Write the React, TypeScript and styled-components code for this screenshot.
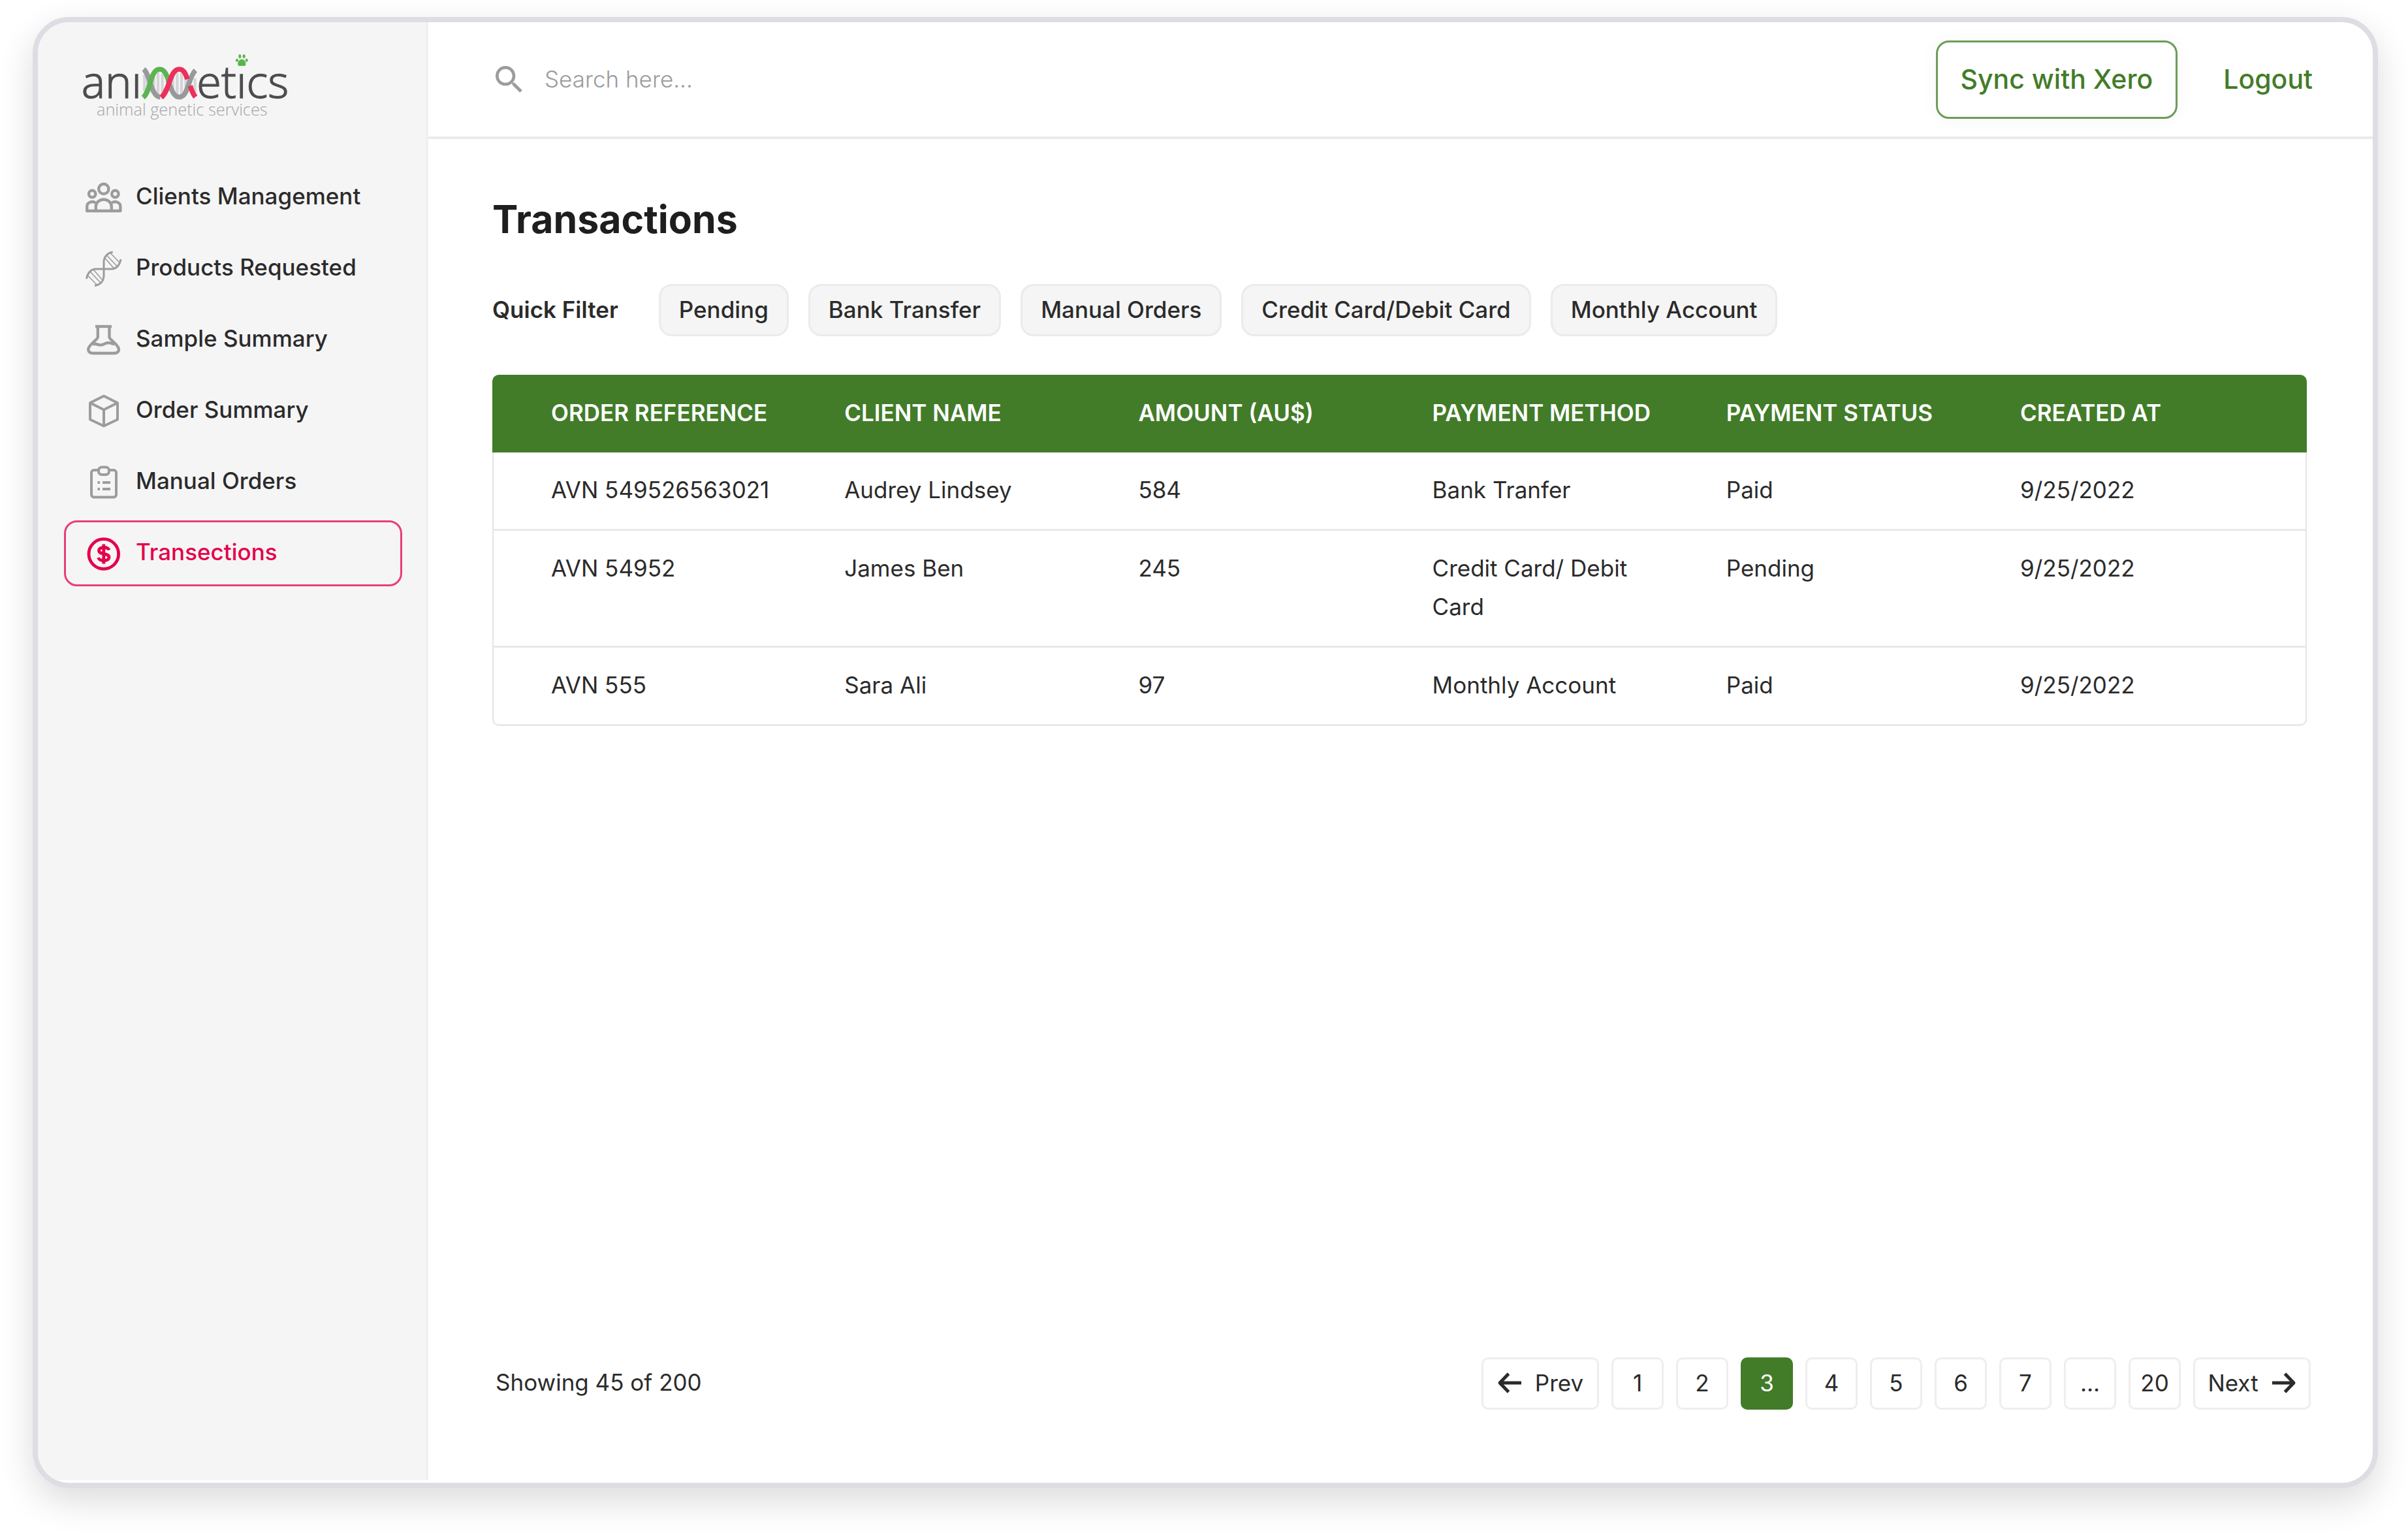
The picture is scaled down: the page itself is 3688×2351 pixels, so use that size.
import React from "react";
import styled, { createGlobalStyle } from "styled-components";
import { MdSearch } from "react-icons/md";

const color = {
  green: "#427c29",
  pink: "#e4004b",
  ink: "#2b2b2b",
  heading: "#1e1e1e",
  muted: "#9c9c9c",
  line: "#ebebeb",
  panel: "#f5f5f5",
  frame: "#dfdce4",
};

const GlobalStyle = createGlobalStyle`
  *, *::before, *::after { box-sizing: border-box; }
  body {
    margin: 0;
    background: #fff;
    color: ${color.ink};
    font-family: Inter, "Liberation Sans", sans-serif;
    font-size: 35px;
    line-height: 59px;
  }
  button, input { font: inherit; color: inherit; }
  button { cursor: pointer; }
`;

const Page = styled.div`
  display: flex;
  min-height: 100vh;
  padding: 26px 46px 72px 50px;
`;

const Frame = styled.div`
  display: flex;
  flex: 1;
  border: 8px solid ${color.frame};
  border-radius: 56px;
  padding-bottom: 4px;
  overflow: hidden;
  background: #fff;
  box-shadow: 0 20px 54px rgba(0, 0, 0, 0.14);
`;

const Sidebar = styled.aside`
  flex: 0 0 598px;
  padding: 26px 36px 40px 40px;
  background: ${color.panel};
  border-right: 4px solid #f0f0f0;
`;

const LogoLink = styled.a`
  display: block;
  height: 140px;
  margin-bottom: 52px;
`;

const NavList = styled.ul`
  display: flex;
  flex-direction: column;
  gap: 8px;
  margin: 0;
  padding: 0;
  list-style: none;
`;

const NavLink = styled.a<{ $active?: boolean }>`
  display: flex;
  align-items: center;
  gap: 21px;
  height: 101px;
  padding: 0 30px;
  border: 3px solid ${(p) => (p.$active ? "#e83f74" : "transparent")};
  border-radius: 20px;
  color: ${(p) => (p.$active ? color.pink : color.ink)};
  font-weight: 500;
  text-decoration: none;
  white-space: nowrap;

  svg {
    flex: none;
    color: ${(p) => (p.$active ? color.pink : color.muted)};
  }
`;

const NavText = styled.span`
  padding-bottom: 4px;
`;

const Main = styled.main`
  display: flex;
  flex: 1;
  flex-direction: column;
  min-width: 0;
`;

const TopBar = styled.header`
  display: flex;
  align-items: center;
  justify-content: space-between;
  height: 179px;
  padding: 0 92px 0 96px;
  border-bottom: 4px solid ${color.line};
`;

const SearchBox = styled.label`
  display: flex;
  flex: 1;
  align-items: center;
  gap: 26px;
  color: ${color.muted};
`;

const SearchInput = styled.input`
  flex: 1;
  max-width: 900px;
  padding: 0;
  border: 0;
  outline: 0;
  background: transparent;
  font-weight: 300;

  &::placeholder {
    color: ${color.muted};
    opacity: 1;
  }
`;

const Actions = styled.div`
  display: flex;
  align-items: center;
  gap: 70px;
  color: ${color.green};
  font-size: 41px;
  font-weight: 500;
`;

const SyncButton = styled.button`
  height: 120px;
  padding: 0 35px;
  border: 3px solid #6c9c58;
  border-radius: 20px;
  background: #fff;
  box-shadow: 0 0 24px rgba(140, 60, 80, 0.05);
`;

const LogoutButton = styled.button`
  padding: 0;
  border: 0;
  background: transparent;
`;

const Content = styled.div`
  display: flex;
  flex: 1;
  flex-direction: column;
  padding: 88px 101px 108px 98px;
`;

const Title = styled.h1`
  margin: 0;
  color: ${color.heading};
  font-size: 59px;
  font-weight: 700;
  line-height: 70px;
`;

const Filters = styled.div`
  display: flex;
  align-items: center;
  gap: 30px;
  margin: 64px 0 59px;
`;

const FilterTitle = styled.span`
  margin-right: 32px;
  padding-bottom: 2px;
  font-weight: 600;
`;

const Chip = styled.button`
  height: 80px;
  padding: 0 28px 2px;
  border: 3px solid ${color.line};
  border-radius: 20px;
  background: ${color.panel};
  font-weight: 500;
  white-space: nowrap;
`;

const Table = styled.table`
  width: 100%;
  table-layout: fixed;
  border-spacing: 0;
  text-align: left;
`;

const Col = styled.col<{ $width?: string }>`
  width: ${(p) => p.$width ?? "auto"};
`;

const Th = styled.th`
  height: 119px;
  padding: 0 0 2px 39px;
  background: ${color.green};
  color: #fff;
  font-weight: 600;
  white-space: nowrap;

  &:first-child {
    padding-left: 90px;
    border-top-left-radius: 10px;
  }
  &:last-child {
    border-top-right-radius: 10px;
  }
`;

const Td = styled.td`
  padding: 28px 39px 30px;
  border-bottom: 3px solid #e8e8e8;
  vertical-align: top;

  &:first-child {
    padding-left: 88px;
    border-left: 2px solid #e4e4e4;
  }
  &:last-child {
    border-right: 2px solid #e4e4e4;
  }
  tr:last-child > &:first-child {
    border-bottom-left-radius: 10px;
  }
  tr:last-child > &:last-child {
    border-bottom-right-radius: 10px;
  }
`;

const Footer = styled.footer`
  display: flex;
  align-items: center;
  justify-content: space-between;
  margin: auto -6px 0 5px;
`;

const FooterText = styled.span`
  padding-bottom: 4px;
`;

const Pager = styled.nav`
  display: flex;
  gap: 19px;
`;

const PageButton = styled.button<{ $current?: boolean; $wide?: boolean }>`
  display: flex;
  align-items: center;
  justify-content: center;
  gap: 20px;
  width: ${(p) => (p.$wide ? "180px" : "80px")};
  height: 80px;
  padding: 0 0 2px;
  border: 3px solid ${(p) => (p.$current ? color.green : "#eeeeee")};
  border-radius: 10px;
  background: ${(p) => (p.$current ? color.green : "#fff")};
  color: ${(p) => (p.$current ? "#fff" : color.ink)};
`;

const Icon = ({ children, width = 4 }: { children: React.ReactNode; width?: number }) => (
  <svg
    width="56"
    height="56"
    viewBox="0 0 56 56"
    fill="none"
    stroke="currentColor"
    strokeWidth={width}
    strokeLinejoin="round"
    aria-hidden="true"
  >
    {children}
  </svg>
);

const ClientsIcon = () => (
  <Icon width={4.4}>
    <circle cx="27.8" cy="14.4" r="7.6" />
    <circle cx="10.2" cy="22" r="5.2" />
    <circle cx="45.4" cy="22" r="5.2" />
    <path d="M15.8 48V41.5a12 11 0 0 1 24 0V48Z" />
    <path d="M15.8 48H2.2V41c0-6 8-9 13-5.4M39.8 48h13.6V41c0-6-8-9-13-5.4" />
  </Icon>
);

const DnaIcon = () => (
  <Icon width={3}>
    <path d="M41.6 2C33 3.500 28 10 28 17V38c0 8-5 14-14 15.500" />
    <path d="M54 13c-1.500 9-7 15-14.500 15H16C8.500 28 3 34 1.500 43" />
    <g strokeWidth="1.600">
      <path d="M29.500 11 43 26.500M32.500 7 48 23.500M38 3.500 52.500 18.500" />
      <path d="M26 45 12.500 29.500M23 49 7.500 32.500M17.500 52.500 3 37.500" />
    </g>
  </Icon>
);

const FlaskIcon = () => (
  <Icon width={4.4}>
    <path d="M15 7H40" />
    <path d="M18.800 7V23.500C18.800 27 4.200 35 4.200 42c0 4 3 6 7 6H44c4 0 7-2 7-6 0-7-14.500-15-14.500-18.500V7" />
    <path d="M11 34.500c5-2.500 8.500 1.500 13 .8s6-3.300 11-3.300c4 0 6 1.500 9 2.500" />
  </Icon>
);

const BoxIcon = () => (
  <Icon width={4}>
    <path d="M28 4.500 49 15V40.500L28 50.500 7 40.500V15Z" />
    <path d="M7 15 28 25.500 49 15M28 25.500V50.500" />
  </Icon>
);

const ClipboardIcon = () => (
  <Icon width={4}>
    <path d="M19 9H13a4 4 0 0 0-4 4V46.500a4 4 0 0 0 4 4H43a4 4 0 0 0 4-4V13a4 4 0 0 0-4-4H37" />
    <rect x="20" y="4.500" width="16" height="11.500" rx="5" />
    <path d="M18.500 28H22M26 28H38M18.500 38H22M26 38H38" />
  </Icon>
);

const DollarIcon = () => (
  <Icon width={4.8}>
    <circle cx="27.800" cy="28.500" r="22.800" />
    <path d="M36 22.500c-1-3-4-4-8-4-4.500 0-7.500 1.600-7.500 4.800 0 7 15.500 3 15.500 10.200 0 3.300-3.300 5-8 5s-7.500-1.500-8.300-4.500M27.800 13.500V43.500" />
  </Icon>
);

const Arrow = ({ forward }: { forward?: boolean }) => (
  <svg
    width="38"
    height="34"
    viewBox="0 0 38 34"
    fill="none"
    stroke="currentColor"
    strokeWidth="5"
    strokeLinejoin="round"
    aria-hidden="true"
  >
    <path d={forward ? "M1 17H34M20.500 3 34 17 20.500 31" : "M37 17H4M17.500 3 4 17 17.500 31"} />
  </svg>
);

const Logo = () => (
  <svg width="380" height="140" viewBox="0 0 1140 420" role="img" aria-label="animetics animal genetic services">
    <g fill="#4d4d4f" stroke="#4d4d4f" strokeWidth="4" fontFamily="Open Sans" fontWeight="300" fontSize="206">
      <text x="80" y="270">anı</text>
      <text x="610" y="270">etıcs</text>
    </g>
    <text x="150" y="350" fill="#a3a5a7" fontFamily="Open Sans" fontWeight="300" fontSize="76">
      animal genetic services
    </text>
    <g stroke="#d3d5d6" strokeWidth="13" fill="none">
      <path d="M370 165V240M384 190V225M412 175V225M432 150V255M452 160V250M500 175V240M520 155V255M540 155V255M560 185V240M602 180V245" />
    </g>
    <g fill="none" strokeWidth="23">
      <path stroke="#97999b" d="M366 138C395 160 400 265 442 266" />
      <path stroke="#97999b" d="M478 190C495 235 505 266 530 266 572 266 570 175 604 143" />
      <path stroke="#5bb450" d="M364 268C402 235 395 138 440 138 462 138 472 165 482 195" />
      <path stroke="#ee2f5b" d="M447 268C487 235 485 138 530 138 550 138 559 158 567 184M580 214C586 235 592 250 604 266" />
    </g>
    <g fill="#57b54d">
      <path d="M817 92c12 0 20 14 18 24-2 10-10 6-18 6s-16 4-18-6c-2-10 6-24 18-24Z" />
      <ellipse cx="808" cy="79" rx="6" ry="9" />
      <ellipse cx="827" cy="79" rx="6" ry="9" />
      <ellipse cx="795" cy="97" rx="6" ry="8" />
      <ellipse cx="839" cy="97" rx="6" ry="8" />
    </g>
  </svg>
);

const navItems = [
  { label: "Clients Management", icon: ClientsIcon },
  { label: "Products Requested", icon: DnaIcon },
  { label: "Sample Summary", icon: FlaskIcon },
  { label: "Order Summary", icon: BoxIcon },
  { label: "Manual Orders", icon: ClipboardIcon },
  { label: "Transections", icon: DollarIcon, active: true },
];

const filters = ["Pending", "Bank Transfer", "Manual Orders", "Credit Card/Debit Card", "Monthly Account"];

const columns = [
  "ORDER REFERENCE",
  "CLIENT NAME",
  "AMOUNT (AU$)",
  "PAYMENT METHOD",
  "PAYMENT STATUS",
  "CREATED AT",
];

const rows = [
  ["AVN 549526563021", "Audrey Lindsey", "584", "Bank Tranfer", "Paid", "9/25/2022"],
  ["AVN 54952", "James Ben", "245", "Credit Card/ Debit Card", "Pending", "9/25/2022"],
  ["AVN 555", "Sara Ali", "97", "Monthly Account", "Paid", "9/25/2022"],
];

const pages = ["1", "2", "3", "4", "5", "6", "7", "...", "20"];

export default function App() {
  return (
    <Page>
      <GlobalStyle />
      <Frame>
        <Sidebar>
          <LogoLink href="#home">
            <Logo />
          </LogoLink>
          <nav aria-label="Main">
            <NavList>
              {navItems.map(({ label, icon: ItemIcon, active }) => (
                <li key={label}>
                  <NavLink href="#" $active={active} aria-current={active ? "page" : undefined}>
                    <ItemIcon />
                    <NavText>{label}</NavText>
                  </NavLink>
                </li>
              ))}
            </NavList>
          </nav>
        </Sidebar>
        <Main>
          <TopBar>
            <SearchBox>
              <MdSearch size={56} aria-hidden="true" />
              <SearchInput type="text" aria-label="Search" placeholder="Search here..." />
            </SearchBox>
            <Actions>
              <SyncButton type="button">Sync with Xero</SyncButton>
              <LogoutButton type="button">Logout</LogoutButton>
            </Actions>
          </TopBar>
          <Content>
            <Title>Transactions</Title>
            <Filters>
              <FilterTitle>Quick Filter</FilterTitle>
              {filters.map((name) => (
                <Chip key={name} type="button">
                  {name}
                </Chip>
              ))}
            </Filters>
            <Table>
              <colgroup>
                <Col $width="18%" />
                <Col $width="16.2%" />
                <Col $width="16.2%" />
                <Col $width="16.2%" />
                <Col $width="16.2%" />
                <Col />
              </colgroup>
              <thead>
                <tr>
                  {columns.map((name) => (
                    <Th key={name} scope="col">
                      {name}
                    </Th>
                  ))}
                </tr>
              </thead>
              <tbody>
                {rows.map((row) => (
                  <tr key={row[0]}>
                    {row.map((cell, i) => (
                      <Td key={columns[i]}>{cell}</Td>
                    ))}
                  </tr>
                ))}
              </tbody>
            </Table>
            <Footer>
              <FooterText>Showing 45 of 200</FooterText>
              <Pager aria-label="Pagination">
                <PageButton type="button" $wide>
                  <Arrow />
                  Prev
                </PageButton>
                {pages.map((page) => (
                  <PageButton key={page} type="button" $current={page === "3"}>
                    {page}
                  </PageButton>
                ))}
                <PageButton type="button" $wide>
                  Next
                  <Arrow forward />
                </PageButton>
              </Pager>
            </Footer>
          </Content>
        </Main>
      </Frame>
    </Page>
  );
}
